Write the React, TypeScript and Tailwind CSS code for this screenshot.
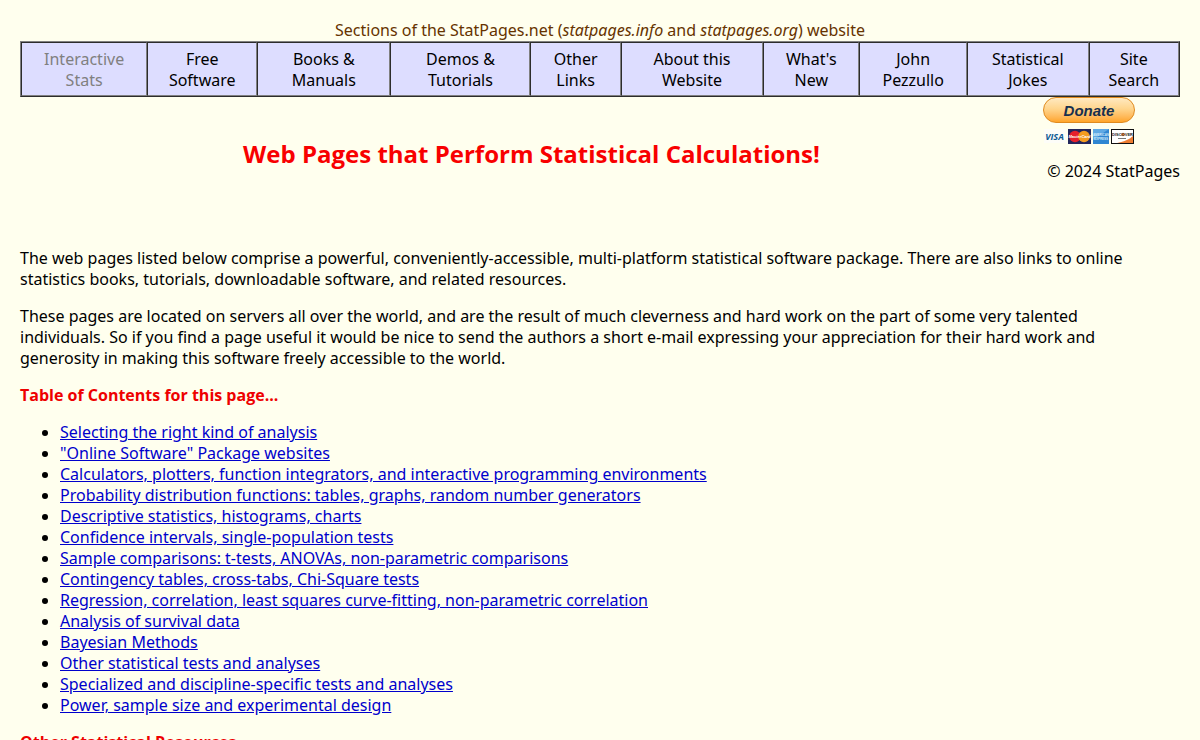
import React from 'react'

interface Section {
  lines: [string, string]
  width: string
  current?: boolean
}

const sections: Section[] = [
  { lines: ['Interactive', 'Stats'], width: 'w-[10.9%]', current: true },
  { lines: ['Free', 'Software'], width: 'w-[9.5%]' },
  { lines: ['Books &', 'Manuals'], width: 'w-[11.5%]' },
  { lines: ['Demos &', 'Tutorials'], width: 'w-[12.1%]' },
  { lines: ['Other', 'Links'], width: 'w-[7.8%]' },
  { lines: ['About this', 'Website'], width: 'w-[12.3%]' },
  { lines: ["What's", 'New'], width: 'w-[8.3%]' },
  { lines: ['John', 'Pezzullo'], width: 'w-[9.3%]' },
  { lines: ['Statistical', 'Jokes'], width: 'w-[10.5%]' },
  { lines: ['Site', 'Search'], width: 'w-[7.8%]' },
]

const contents = [
  { id: 'selecting', title: 'Selecting the right kind of analysis' },
  { id: 'packages', title: '"Online Software" Package websites' },
  { id: 'calculators', title: 'Calculators, plotters, function integrators, and interactive programming environments' },
  { id: 'distributions', title: 'Probability distribution functions: tables, graphs, random number generators' },
  { id: 'descriptive', title: 'Descriptive statistics, histograms, charts' },
  { id: 'confidence', title: 'Confidence intervals, single-population tests' },
  { id: 'comparisons', title: 'Sample comparisons: t-tests, ANOVAs, non-parametric comparisons' },
  { id: 'contingency', title: 'Contingency tables, cross-tabs, Chi-Square tests' },
  { id: 'regression', title: 'Regression, correlation, least squares curve-fitting, non-parametric correlation' },
  { id: 'survival', title: 'Analysis of survival data' },
  { id: 'bayesian', title: 'Bayesian Methods' },
  { id: 'other', title: 'Other statistical tests and analyses' },
  { id: 'specialized', title: 'Specialized and discipline-specific tests and analyses' },
  { id: 'power', title: 'Power, sample size and experimental design' },
]

function SectionNav() {
  return (
    <nav>
      <table className="w-full table-fixed border-separate border-spacing-0 border border-t-[#808080] border-l-[#808080] border-r-[#2c2c2c] border-b-[#2c2c2c] bg-[#ddddff] text-center">
        <caption className="text-[#663300]">
          Sections of the StatPages.net (<i>statpages.info</i> and <i>statpages.org</i>) website
        </caption>
        <tbody>
          <tr>
            {sections.map((section) => (
              <td
                key={section.lines[0]}
                className={`border border-t-[#2c2c2c] border-l-[#2c2c2c] border-r-[#808080] border-b-[#808080] pt-1.5 pb-1 ${section.width}`}
              >
                {section.current ? (
                  <span className="text-[#808080]">
                    {section.lines[0]}
                    <br />
                    {section.lines[1]}
                  </span>
                ) : (
                  <a href="#" className="text-black">
                    {section.lines[0]}
                    <br />
                    {section.lines[1]}
                  </a>
                )}
              </td>
            ))}
          </tr>
        </tbody>
      </table>
    </nav>
  )
}

function PaymentCards() {
  return (
    <svg
      width="92"
      height="16"
      viewBox="0 0 92 16"
      className="mt-[5px] block font-['Liberation_Sans',sans-serif] font-bold"
      textAnchor="middle"
      aria-hidden="true"
    >
      {/* Visa */}
      <rect x="1" y="1" width="22" height="14" fill="#fdfdf8" />
      <text x="11.5" y="12" fontSize="9" fontStyle="italic" fontFamily="Open Sans, sans-serif" fill="#0e5a94">
        VISA
      </text>
      {/* MasterCard */}
      <rect x="25" y="1" width="23" height="15" fill="#23275c" />
      <circle cx="32" cy="8.5" r="5.8" fill="#e5202c" />
      <circle cx="41" cy="8.5" r="5.8" fill="#f59c20" />
      <text x="36.5" y="10" fontSize="4" fontStyle="italic" fill="#fff">
        MasterCard
      </text>
      {/* American Express */}
      <rect x="50" y="1" width="16" height="15" fill="#2f86d2" />
      <path d="M50 1h16L50 12z" fill="#5fa9e4" />
      <text x="58" y="8" fontSize="3" fill="#d3eafa">
        AMERICAN
      </text>
      <text x="58" y="12" fontSize="3" fill="#d3eafa">
        EXPRESS
      </text>
      {/* Discover */}
      <rect x="68.5" y="1.5" width="22" height="14" fill="#fff" />
      <path d="M90 8v7.5H72C81 14 87 11 90 8z" fill="#ee7d32" />
      <circle cx="80" cy="6.5" r="1.8" fill="#ee7d32" />
      <text x="79.5" y="8" fontSize="4" fill="#222">
        DISCOVER
      </text>
      <path d="M75 10.5h8" stroke="#777" strokeWidth="1" />
      <rect x="68.5" y="1.5" width="22" height="14" fill="none" stroke="#111" strokeWidth="1" />
    </svg>
  )
}

function DonateButton() {
  return (
    <button type="button" className="block w-[92px]">
      <span className="flex h-[26px] items-center justify-center rounded-full border border-[#e08a1e] bg-linear-to-b from-[#ffe9c0] via-[#ffd58c] via-45% to-[#ffa526] font-['Liberation_Sans',sans-serif] text-[15px] leading-none font-bold text-[#17304f] italic">
        Donate
      </span>
      <PaymentCards />
    </button>
  )
}

export default function App() {
  return (
    <div className="min-h-screen bg-[#ffffee] p-5 font-['Noto_Sans','Open_Sans',sans-serif] text-base leading-[21px] text-black">
      <SectionNav />

      <header className="flex justify-between pb-[66px]">
        <h1 className="flex-1 pt-[41px] text-center font-['Open_Sans',sans-serif] text-2xl leading-8 font-bold text-[#f80000]">
          Web Pages that Perform Statistical Calculations!
        </h1>
        <div className="w-[137px] shrink-0">
          <DonateButton />
          <p className="mt-[17px] text-right">© 2024 StatPages</p>
        </div>
      </header>

      <main className="space-y-4">
        <p className="pr-8">
          The web pages listed below comprise a powerful, conveniently-accessible, multi-platform statistical software
          package. There are also links to online statistics books, tutorials, downloadable software, and related
          resources.
        </p>
        <p className="pr-8">
          These pages are located on servers all over the world, and are the result of much cleverness and hard work on
          the part of some very talented individuals. So if you find a page useful it would be nice to send the authors
          a short e-mail expressing your appreciation for their hard work and generosity in making this software freely
          accessible to the world.
        </p>
        <h2 className="font-['Open_Sans',sans-serif] font-bold text-[#ee0000]">Table of Contents for this page...</h2>
        <ul className="list-disc pl-10">
          {contents.map((item) => (
            <li key={item.id}>
              <a href={`#${item.id}`} className="text-[#0000cc] underline">
                {item.title}
              </a>
            </li>
          ))}
        </ul>
        <h2 className="font-['Open_Sans',sans-serif] font-bold text-[#ee0000]">Other Statistical Resources...</h2>
      </main>
    </div>
  )
}
